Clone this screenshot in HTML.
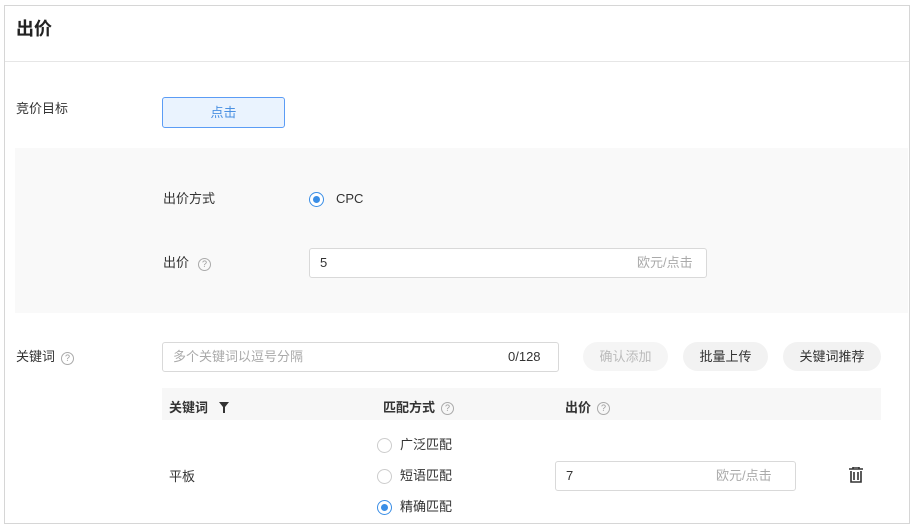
<!DOCTYPE html>
<html><head><meta charset="utf-8"><style>
*{margin:0;padding:0;box-sizing:border-box}
body{width:918px;height:528px;background:#fff;font-family:"Liberation Sans","Noto Sans CJK SC",sans-serif;font-size:13px;color:#333;position:relative;overflow:hidden}
.a{position:absolute;white-space:nowrap;line-height:20px}
.q{position:absolute;width:13px;height:13px;border:1px solid #aaa;border-radius:50%;font-size:9px;color:#999;text-align:center;line-height:11px}
.inp{position:absolute;border:1px solid #d9d9d9;border-radius:3px;background:#fff}
.btn{position:absolute;height:29px;border-radius:15px;background:#f2f2f2;text-align:center;line-height:29px;font-size:13px}
.r{position:absolute;width:15px;height:15px;border:1px solid #ccc;border-radius:50%;background:#fff}
.r.on{border-color:#3a8ee6}
.r.on::after{content:"";position:absolute;left:3px;top:3px;width:7px;height:7px;border-radius:50%;background:#3a8ee6}
</style></head><body>
<div class="a" style="left:4px;top:5px;width:906px;height:519px;border:1px solid #d6d6d6"></div>
<div class="a" style="left:5px;top:61px;width:904px;height:1px;background:#e6e6e6"></div>
<div class="a" style="left:16px;top:17px;font-size:18px;font-weight:bold;color:#222;line-height:24px">出价</div>
<div class="a" style="left:16px;top:99px">竞价目标</div>
<div class="a" style="left:162px;top:97px;width:123px;height:31px;border:1px solid #5b9cf5;border-radius:3px;background:#eaf3fe;color:#4a90e2;text-align:center;line-height:29px">点击</div>
<div class="a" style="left:15px;top:148px;width:893px;height:165px;background:#f9f9f9"></div>
<div class="a" style="left:163px;top:189px">出价方式</div>
<div class="r on" style="left:309px;top:192px"></div>
<div class="a" style="left:336px;top:189px">CPC</div>
<div class="a" style="left:163px;top:253px">出价</div>
<div class="q" style="left:198px;top:258px">?</div>
<div class="inp" style="left:309px;top:248px;width:398px;height:30px"></div>
<div class="a" style="left:320px;top:253px">5</div>
<div class="a" style="left:637px;top:253px;color:#aaa">欧元/点击</div>
<div class="a" style="left:16px;top:347px">关键词</div>
<div class="q" style="left:61px;top:352px">?</div>
<div class="inp" style="left:162px;top:342px;width:397px;height:30px"></div>
<div class="a" style="left:173px;top:347px;color:#aaa">多个关键词以逗号分隔</div>
<div class="a" style="left:508px;top:347px">0/128</div>
<div class="btn" style="left:583px;top:342px;width:85px;color:#bbb;background:#f5f5f5">确认添加</div>
<div class="btn" style="left:683px;top:342px;width:85px">批量上传</div>
<div class="btn" style="left:783px;top:342px;width:98px">关键词推荐</div>
<div class="a" style="left:162px;top:388px;width:719px;height:32px;background:#f7f7f7"></div>
<div class="a" style="left:169px;top:398px;font-weight:bold">关键词</div>
<svg class="a" style="left:219px;top:402px" width="10" height="11"><path d="M0 0H10L6 5V11H4V5Z" fill="#333"/></svg>
<div class="a" style="left:383px;top:398px;font-weight:bold">匹配方式</div>
<div class="q" style="left:441px;top:402px">?</div>
<div class="a" style="left:565px;top:398px;font-weight:bold">出价</div>
<div class="q" style="left:597px;top:402px">?</div>
<div class="r" style="left:377px;top:438px"></div><div class="a" style="left:400px;top:435px">广泛匹配</div>
<div class="r" style="left:377px;top:469px"></div><div class="a" style="left:400px;top:466px">短语匹配</div>
<div class="r on" style="left:377px;top:500px"></div><div class="a" style="left:400px;top:497px">精确匹配</div>
<div class="a" style="left:169px;top:467px">平板</div>
<div class="inp" style="left:555px;top:461px;width:241px;height:30px"></div>
<div class="a" style="left:566px;top:466px">7</div>
<div class="a" style="left:716px;top:466px;color:#aaa">欧元/点击</div>
<svg class="a" style="left:849px;top:467px" width="14" height="16"><path d="M0 2H14M4 2V0H10V2M2 4V15H12V4M5 5V13M9 5V13" stroke="#333" stroke-width="1.6" fill="none"/></svg>
</body></html>
